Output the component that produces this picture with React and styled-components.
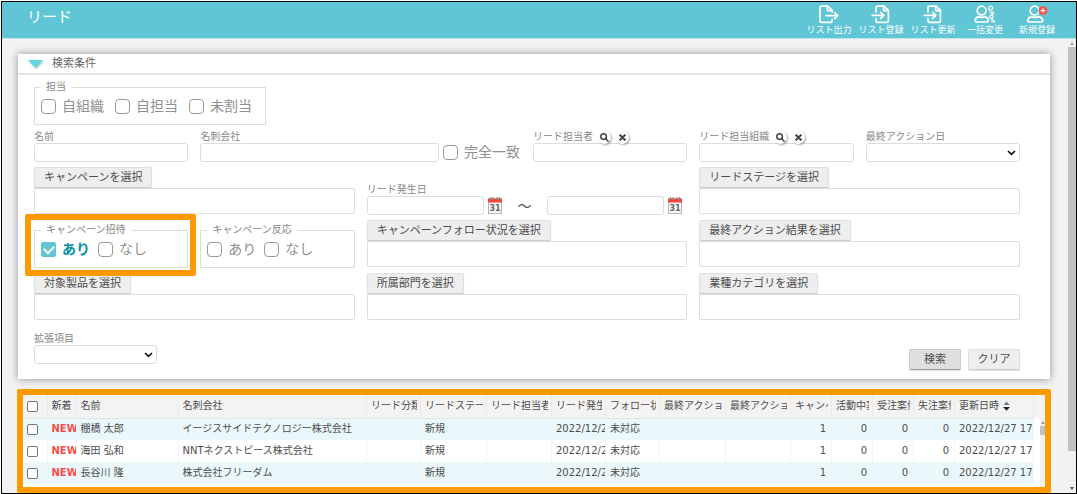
import React from 'react';
import styled, {createGlobalStyle} from 'styled-components';

const GlobalStyle = createGlobalStyle`
  * {
    box-sizing: border-box;
  }
  body {
    margin: 0;
    background: #ffffff;
    font-family: "DejaVu Sans", "Noto Sans CJK JP", sans-serif;
    font-size: 10px;
    line-height: 12px;
    color: #555555;
  }
  button, input, select, textarea {
    font-family: inherit;
    margin: 0;
  }
`

const Frame = styled.div`
  display: flex;
  flex-direction: column;
  min-height: calc(100vh - 1px);
  margin: 1px 0 0 1px;
  border: 1px solid #000000;
  background: #f2f2f2;
`

const Header = styled.header`
  display: flex;
  justify-content: space-between;
  height: 37px;
  padding: 0 13px 0 25px;
  background: #60c5d4;
  border-bottom: 1px solid #bfe5eb;
  color: #ffffff;
`

const PageTitle = styled.h1`
  margin: 0;
  font-size: 15px;
  line-height: 31px;
  font-weight: 400;
`

const Toolbar = styled.nav`
  display: flex;
`

const ToolButton = styled.button`
  display: flex;
  flex-direction: column;
  align-items: center;
  width: 52px;
  padding: 2px 0 0;
  border: 0;
  background: none;
  color: #ffffff;
  font-size: 9px;
  line-height: 12px;
  white-space: nowrap;
  cursor: pointer;
  svg {
    display: block;
    fill: none;
    stroke: currentColor;
    stroke-width: 1.7;
    stroke-linejoin: round;
    stroke-linecap: round;
  }
`

const Body = styled.div`
  display: flex;
  flex: 1;
`

const Main = styled.main`
  flex: 1;
  min-width: 0;
  padding: 15px 17px 0 15px;
`

const ScrollTrack = styled.div`
  display: flex;
  flex-direction: column;
  align-items: center;
  width: 8px;
  padding: 3px 0;
  background: #f1f1f1;
`

const ScrollThumb = styled.div`
  flex: 1;
  width: 8px;
  margin: 2px 0 36px;
  background: #c1c1c1;
`

const Arrow = styled.span`
  width: 0;
  height: 0;
  border: 2px solid transparent;
  border-${(props) => (props.$up ? 'bottom' : 'top')}: 3px solid ${(props) => (props.$up ? '#a0a0a0' : '#555555')};
  border-${(props) => (props.$up ? 'top' : 'bottom')}: 0;
`

const Panel = styled.section`
  margin: 0 1px;
  background: #ffffff;
  box-shadow: 0 0 8px rgba(0, 0, 0, 0.4);
`

const PanelToggle = styled.button`
  display: flex;
  align-items: center;
  gap: 8px;
  width: 100%;
  height: 21px;
  padding: 0 10px;
  border: 0;
  border-bottom: 2px solid #e6e6e6;
  background: none;
  color: #666666;
  font-size: 11px;
  line-height: 16px;
  svg {
    filter: drop-shadow(1px 1px 1px rgba(0, 0, 0, 0.25));
  }
`

const Form = styled.form`
  padding: 6px 30px 9px 16px;
`

const Grid = styled.div`
  display: grid;
  grid-template-columns: repeat(6, 1fr);
  gap: 5px 12px;
  margin-top: 6px;
`

const Cell = styled.div`
  grid-column: span ${(props) => props.$span || 1};
  align-self: ${(props) => (props.$bottom ? 'end' : 'start')};
  min-width: 0;
  min-height: ${(props) => (props.$tall ? '48px' : '0')};
`

const Group = styled.fieldset`
  display: block;
  width: ${(props) => (props.$fit ? 'fit-content' : 'auto')};
  min-width: 0;
  margin: 0;
  padding: 6px ${(props) => (props.$fit ? '13px' : '6px')} 10px 6px;
  border: 1px solid #dddddd;
  legend {
    padding: 0 5px;
    color: #888888;
  }
`

const Options = styled.div`
  display: flex;
  gap: ${(props) => (props.$wide ? '11px' : '8px')};
`

const Check = styled.label`
  display: flex;
  align-items: center;
  gap: 6px;
  height: 15px;
  font-size: 14px;
  line-height: 15px;
  white-space: nowrap;
  color: #909090;
  &:has(input:checked) {
    color: #0a8fa8;
    font-weight: 700;
  }
`

const Tick = styled.input.attrs({type: 'checkbox'})`
  appearance: none;
  display: grid;
  flex: none;
  place-items: center;
  width: 15px;
  height: 15px;
  border: 1px solid #999999;
  border-radius: 4px;
  background: #ffffff;
  &:checked {
    border-color: #60c5d4;
    border-radius: 2px;
    background: #60c5d4;
  }
  &:checked::after {
    content: "";
    width: 8px;
    height: 5px;
    border: solid #ffffff;
    border-width: 0 0 2px 2px;
    transform: translateY(-1px) rotate(-45deg);
  }
`

const Highlight = styled.div`
  position: relative;
  &::after {
    content: "";
    position: absolute;
    z-index: 1;
    inset: -10px -8px -8px -9px;
    border: 6px solid #ff9900;
    border-radius: 2px;
    pointer-events: none;
  }
`

const FieldLabel = styled.div`
  display: flex;
  align-items: center;
  height: 12px;
  gap: 5px;
  color: #888888;
  white-space: nowrap;
`

const RoundButton = styled.button`
  display: grid;
  place-items: center;
  width: 13px;
  height: 13px;
  padding: 0;
  border: 0;
  border-radius: 50%;
  background: #ffffff;
  box-shadow: 1px 1px 2px rgba(0, 0, 0, 0.35);
`

const TextInput = styled.input`
  display: block;
  flex: 1;
  width: 100%;
  min-width: 0;
  height: 19px;
  padding: 0 4px;
  border: 1px solid #dddddd;
  border-radius: 3px;
  font-size: 10px;
`

const InputRow = styled.div`
  display: flex;
  align-items: center;
  gap: 4px;
  padding-right: ${(props) => (props.$dates ? '5px' : '1px')};
`

const Tilde = styled.span`
  width: 37px;
  text-align: center;
  font-size: 14px;
`

const CalendarButton = styled.button`
  display: block;
  width: 14px;
  height: 17px;
  padding: 0;
  border: 0;
  background: none;
  svg {
    display: block;
  }
`

const SelectBox = styled.div`
  display: grid;
  align-items: center;
  width: ${(props) => props.$width || '100%'};
  select, svg {
    grid-area: 1 / 1;
  }
  select {
    appearance: none;
    width: 100%;
    height: 19px;
    border: 1px solid #dddddd;
    border-radius: 3px;
    background: #ffffff;
    font-size: 10px;
  }
  svg {
    justify-self: end;
    margin-right: 4px;
    pointer-events: none;
  }
`

const Button = styled.button`
  display: block;
  width: ${(props) => (props.$wide ? '52px' : 'auto')};
  height: 21px;
  padding: 0 ${(props) => (props.$wide ? '0' : '9px')};
  border: 1px solid ${(props) => (props.$primary ? '#cccccc' : '#e0e0e0')};
  border-bottom-color: ${(props) => (props.$primary ? '#999999' : '#cccccc')};
  border-radius: 2px;
  background: ${(props) => (props.$primary ? '#dfdfdf' : '#eeeeee')};
  box-shadow: 0 1px 1px rgba(0, 0, 0, 0.12);
  color: #4c4c4c;
  font-size: 11px;
  line-height: 16px;
  white-space: nowrap;
`

const Chosen = styled.textarea`
  display: block;
  width: 100%;
  height: 26px;
  border: 1px solid #dddddd;
  border-radius: 2px;
  resize: none;
`

const Footer = styled.div`
  display: flex;
  justify-content: space-between;
  margin-top: 12px;
`

const Actions = styled.div`
  display: flex;
  gap: 7px;
  padding-top: 16px;
`

const Results = styled.section`
  display: flex;
  height: 104px;
  margin-top: 10px;
  border: 6px solid #ff9900;
  border-radius: 2px;
  background: #ffffff;
  overflow: hidden;
`

const Table = styled.table`
  flex: 1;
  width: 0;
  height: fit-content;
  table-layout: fixed;
  border-collapse: collapse;
  th, td {
    padding: 0 0 0 4px;
    border-right: 1px solid #f3f3f3;
    text-align: left;
    font-weight: 400;
    white-space: nowrap;
    overflow: hidden;
    color: #4c4c4c;
  }
  th {
    height: 23px;
    padding-right: 3px;
    border-right-color: #e9e9e9;
    border-bottom: 1px solid #e4e4e4;
    background: #f3f3f3;
  }
  td {
    height: 22px;
  }
  tbody tr:nth-child(odd) {
    background: #ebf8fb;
  }
  td.number {
    padding-right: 5px;
    text-align: right;
  }
`

const HeadText = styled.div`
  display: flex;
  align-items: center;
  gap: 4px;
  overflow: hidden;
`

const RowTick = styled.input.attrs({type: 'checkbox'})`
  appearance: none;
  display: block;
  width: 11px;
  height: 11px;
  border: 1px solid #767676;
  border-radius: 2px;
  background: #ffffff;
`

const NewMark = styled.strong`
  color: #ff4b4b;
`

const TableScroll = styled.div`
  width: 11px;
  &::before {
    content: "";
    display: block;
    height: 23px;
    background: #f3f3f3;
  }
`

const TableScrollTrack = styled.div`
  display: flex;
  flex-direction: column;
  align-items: center;
  width: 5px;
  height: 69px;
  margin-left: 6px;
  padding-top: 3px;
  background: #f1f1f1;
  &::after {
    content: "";
    width: 5px;
    height: 9px;
    margin-top: 2px;
    background: #c1c1c1;
  }
`

const ExportIcon = () => (
  <svg width="20" height="20" viewBox="0 0 20 20">
    <path d="M13.2 8V6.4L8.8 2.2H2.4Q1 2.2 1 3.6V17Q1 18.4 2.4 18.4H11.8Q13.2 18.4 13.2 17V15.4" />
    <path d="M8.4 2.4V6.6H13M7 11.6H18.6M15.6 8.6L18.8 11.6L15.6 14.6" />
  </svg>
)

const ImportIcon = () => (
  <svg width="20" height="20" viewBox="0 0 20 20">
    <path d="M5 8V3.6Q5 2.2 6.4 2.2H13L17.4 6.4V17Q17.4 18.4 16 18.4H6.4Q5 18.4 5 17V14.6" />
    <path d="M12.6 2.4V6.6H17.2M1.2 11.4H12.4M9.6 8.4L12.8 11.4L9.6 14.4" />
  </svg>
)

const PeopleIcon = () => (
  <svg width="22" height="20" viewBox="0 0 22 20">
    <circle cx="7.6" cy="6.6" r="4.4" />
    <path d="M4.4 12.6Q1.4 13.4 1.2 16.6Q1.2 18 2.6 18H13Q14.4 18 14.4 16.6Q14.2 13.4 11.2 12.6Q7.8 14 4.4 12.6Z" />
    <g strokeWidth="1.2">
      <circle cx="16.6" cy="4" r="2" />
      <path d="M15.6 8.2Q18.8 6.8 19.8 9.8H17" />
      <circle cx="17.4" cy="12.8" r="1.6" />
      <path d="M17.2 16Q20 15.4 20.6 18H17.4" />
    </g>
  </svg>
)

const PersonAddIcon = () => (
  <svg width="22" height="20" viewBox="0 0 22 20">
    <circle cx="8.6" cy="6.6" r="4.4" />
    <path d="M5 12.6Q2 13.4 1.6 16.6Q1.6 18 3 18H15.4Q16.8 18 16.8 16.6Q16.4 13.4 13.2 12.6Q9 14 5 12.6Z" />
    <circle cx="17" cy="6.6" r="4.4" fill="#ff4b4b" stroke="none" />
    <path d="M17 4.6V8.6M15 6.6H19" strokeWidth="1.2" />
  </svg>
)

const CalendarIcon = () => (
  <svg width="14" height="17" viewBox="0 0 14 17">
    <rect x="0.5" y="2" width="13" height="14.5" fill="#f7f7f7" stroke="#b5b5b5" />
    <rect x="0" y="1.5" width="14" height="4" fill="#f2453d" />
    <path d="M2.5 0V3M5 0V3M9 0V3M11.5 0V3" stroke="#888888" strokeWidth="1.2" />
    <text x="7" y="14" textAnchor="middle" fontSize="8" fontWeight="700" fill="#666666">31</text>
  </svg>
)

const Chevron = () => (
  <svg width="9" height="6" viewBox="0 0 9 6" fill="none" stroke="#111111" strokeWidth="1.7">
    <path d="M1 1L4.5 4.4L8 1" />
  </svg>
)

const SortIcon = () => (
  <svg width="7" height="10" viewBox="0 0 7 10">
    <path d="M0.5 4L3.5 0.5L6.5 4Z" fill="#777777" />
    <path d="M0 6H7L3.5 9.8Z" fill="#222222" />
  </svg>
)

const tools = [
  {label: 'リスト出力', icon: <ExportIcon />},
  {label: 'リスト登録', icon: <ImportIcon />},
  {label: 'リスト更新', icon: <ImportIcon />},
  {label: '一括変更', icon: <PeopleIcon />},
  {label: '新規登録', icon: <PersonAddIcon />},
]

// the column without a width takes the space that is left
const columns = [
  {title: '新着', width: 29},
  {title: '名前', width: 102},
  {title: '名刺会社'},
  {title: 'リード分類', width: 54},
  {title: 'リードステージ', width: 66},
  {title: 'リード担当者', width: 65},
  {title: 'リード発生日', width: 54},
  {title: 'フォロー状況', width: 54},
  {title: '最終アクション日', width: 66},
  {title: '最終アクション結果', width: 65},
  {title: 'キャンペーン', width: 41},
  {title: '活動中案件', width: 41},
  {title: '受注案件', width: 41},
  {title: '失注案件', width: 41},
  {title: '更新日時', width: 79, sorted: true},
]

const leads = [
  {name: '棚橋 太郎', company: 'イージスサイドテクノロジー株式会社'},
  {name: '海田 弘和', company: 'NNTネクストピース株式会社'},
  {name: '長谷川 隆', company: '株式会社フリーダム'},
]

const CheckItem = ({label, ...rest}) => (
  <Check>
    <Tick {...rest} />
    {label}
  </Check>
)

const TextField = ({id, label, lookup}) => (
  <Cell>
    <FieldLabel>
      <label htmlFor={id}>{label}</label>
      {lookup && (
        <>
          <RoundButton type="button" aria-label={`${label}を検索`}>
            <svg width="9" height="9" viewBox="0 0 9 9" fill="none" stroke="#444444" strokeWidth="1.5">
              <circle cx="3.6" cy="3.6" r="2.8" />
              <path d="M5.6 5.6L8.6 8.6" />
            </svg>
          </RoundButton>
          <RoundButton type="button" aria-label={`${label}を消去`}>
            <svg width="7" height="7" viewBox="0 0 7 7" stroke="#444444" strokeWidth="2">
              <path d="M0.6 0.6L6.4 6.4M6.4 0.6L0.6 6.4" />
            </svg>
          </RoundButton>
        </>
      )}
    </FieldLabel>
    <TextInput id={id} />
  </Cell>
)

const SelectField = ({id, label, width}) => (
  <div>
    <FieldLabel as="label" htmlFor={id}>{label}</FieldLabel>
    <SelectBox $width={width}>
      <select id={id} />
      <Chevron />
    </SelectBox>
  </div>
)

const Picker = ({label}) => (
  <Cell $span={2} $tall>
    <Button type="button">{label}</Button>
    <Chosen readOnly aria-label={label} />
  </Cell>
)

const YesNo = ({legend, checked}) => (
  <Group>
    <legend>{legend}</legend>
    <Options>
      <CheckItem label="あり" defaultChecked={checked} />
      <CheckItem label="なし" />
    </Options>
  </Group>
)

const SearchPanel = () => (
  <Panel>
    <PanelToggle type="button" aria-expanded="true">
      <svg width="16" height="8" viewBox="0 0 16 8">
        <path d="M0 0H15L7.5 8Z" fill="#62d6df" />
      </svg>
      検索条件
    </PanelToggle>
    <Form onSubmit={(e) => e.preventDefault()}>
      <Group $fit>
        <legend>担当</legend>
        <Options $wide>
          <CheckItem label="自組織" />
          <CheckItem label="自担当" />
          <CheckItem label="未割当" />
        </Options>
      </Group>
      <Grid>
        <TextField id="name" label="名前" />
        <Cell $span={2}>
          <FieldLabel as="label" htmlFor="company">名刺会社</FieldLabel>
          <InputRow>
            <TextInput id="company" />
            <CheckItem label="完全一致" />
          </InputRow>
        </Cell>
        <TextField id="owner" label="リード担当者" lookup />
        <TextField id="section" label="リード担当組織" lookup />
        <SelectField id="last-action" label="最終アクション日" />

        <Picker label="キャンペーンを選択" />
        <Cell $span={2} $bottom>
          <FieldLabel as="label" htmlFor="from">リード発生日</FieldLabel>
          <InputRow $dates>
            <TextInput id="from" />
            <CalendarButton type="button" aria-label="開始日"><CalendarIcon /></CalendarButton>
            <Tilde>～</Tilde>
            <TextInput aria-label="リード発生日 終了" />
            <CalendarButton type="button" aria-label="終了日"><CalendarIcon /></CalendarButton>
          </InputRow>
        </Cell>
        <Picker label="リードステージを選択" />

        <Cell $bottom>
          <Highlight>
            <YesNo legend="キャンペーン招待" checked />
          </Highlight>
        </Cell>
        <Cell $bottom>
          <YesNo legend="キャンペーン反応" />
        </Cell>
        <Picker label="キャンペーンフォロー状況を選択" />
        <Picker label="最終アクション結果を選択" />

        <Picker label="対象製品を選択" />
        <Picker label="所属部門を選択" />
        <Picker label="業種カテゴリを選択" />
      </Grid>
      <Footer>
        <SelectField id="extra" label="拡張項目" width="123px" />
        <Actions>
          <Button type="submit" $primary $wide>検索</Button>
          <Button type="reset" $wide>クリア</Button>
        </Actions>
      </Footer>
    </Form>
  </Panel>
)

const LeadTable = () => (
  <Results>
    <Table>
      <colgroup>
        <col width={24} />
        {columns.map((c) => <col key={c.title} width={c.width} />)}
      </colgroup>
      <thead>
        <tr>
          <th><RowTick aria-label="すべて選択" /></th>
          {columns.map((c) => (
            <th key={c.title}>
              <HeadText>
                {c.title}
                {c.sorted && <SortIcon />}
              </HeadText>
            </th>
          ))}
        </tr>
      </thead>
      <tbody>
        {leads.map((lead) => (
          <tr key={lead.name}>
            <td><RowTick aria-label={lead.name} /></td>
            <td><NewMark>NEW</NewMark></td>
            <td>{lead.name}</td>
            <td>{lead.company}</td>
            <td />
            <td>新規</td>
            <td />
            <td>2022/12/27</td>
            <td>未対応</td>
            <td />
            <td />
            <td className="number">1</td>
            <td className="number">0</td>
            <td className="number">0</td>
            <td className="number">0</td>
            <td>2022/12/27 17</td>
          </tr>
        ))}
      </tbody>
    </Table>
    <TableScroll aria-hidden="true">
      <TableScrollTrack><Arrow $up /></TableScrollTrack>
    </TableScroll>
  </Results>
)

export default function App() {
  return (
    <Frame>
      <GlobalStyle />
      <Header>
        <PageTitle>リード</PageTitle>
        <Toolbar>
          {tools.map((tool) => (
            <ToolButton key={tool.label} type="button">
              {tool.icon}
              {tool.label}
            </ToolButton>
          ))}
        </Toolbar>
      </Header>
      <Body>
        <Main>
          <SearchPanel />
          <LeadTable />
        </Main>
        <ScrollTrack aria-hidden="true">
          <Arrow $up />
          <ScrollThumb />
          <Arrow />
        </ScrollTrack>
      </Body>
    </Frame>
  )
}
